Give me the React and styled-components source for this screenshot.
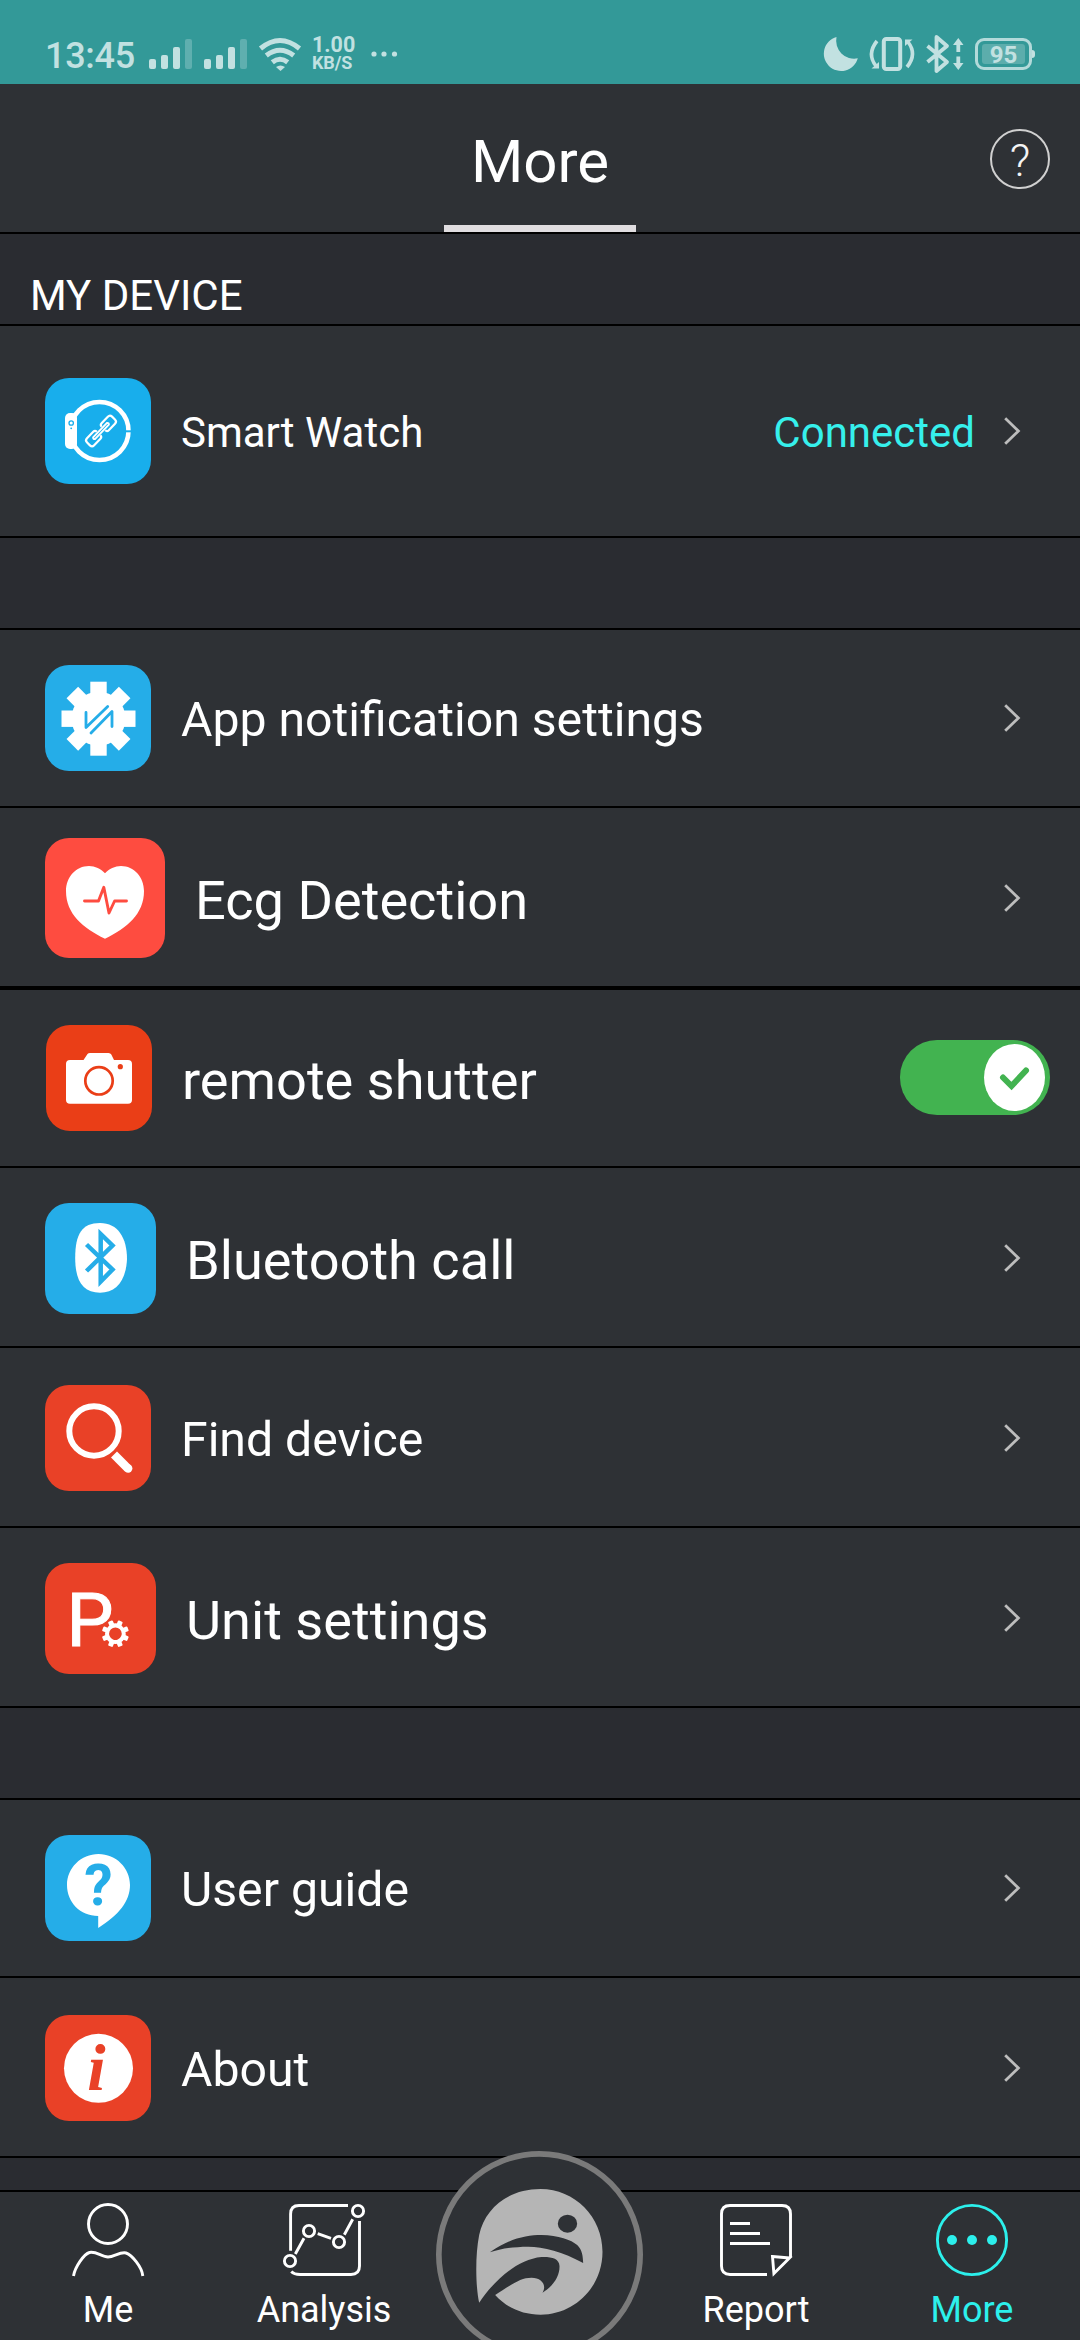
import React from 'react';
import styled, { createGlobalStyle } from 'styled-components';

const GlobalStyle = createGlobalStyle`
  body {
    margin: 0;
    background: #2a2c31;
    font-family: Roboto, sans-serif;
  }

  svg {
    display: block;
    flex-shrink: 0;
    overflow: visible;
  }
`;

const Screen = styled.div`
  display: flex;
  flex-direction: column;
  width: 1080px;
  height: 2340px;
  overflow: hidden;
  background: #2a2c31;
  color: #fff;
`;

/* status bar */

const StatusBar = styled.div`
  display: flex;
  align-items: center;
  justify-content: space-between;
  box-sizing: border-box;
  height: 84px;
  padding: 24px 45px 0 45px;
  background: #339998;
  color: #c2e1e1;
`;

const StatusGroup = styled.div`
  display: flex;
  align-items: center;
`;

const Clock = styled.span`
  width: 92px;
  margin-right: 12px;
  padding-top: 3px;
  font-size: 36px;
  line-height: 40px;
  font-weight: 500;
  letter-spacing: -0.3px;
`;

const Signal = styled.div`
  display: flex;
  align-items: flex-end;
  gap: 5px;
  height: 30px;
  margin-right: 12px;
`;

const SignalBar = styled.span`
  width: 7px;
  height: ${({ $height }) => $height}px;
  border-radius: 2px;
  background: ${({ $dim }) => ($dim ? '#5fafaf' : '#c2e1e1')};
`;

const NetSpeed = styled.div`
  display: flex;
  flex-direction: column;
  width: 42px;
  margin: 0 16px 0 11px;
  font-weight: 700;
  white-space: nowrap;
`;

const SpeedValue = styled.span`
  font-size: 21.5px;
  line-height: 18px;
`;

const SpeedUnit = styled.span`
  font-size: 18px;
  line-height: 18px;
  letter-spacing: -0.1px;
`;

const StatusIcon = styled.svg`
  margin-left: 12px;
`;

const Battery = styled.div`
  display: flex;
  align-items: center;
  margin-left: 12px;
`;

const BatteryCase = styled.div`
  box-sizing: border-box;
  width: 57px;
  height: 32px;
  padding: 3px;
  border: 3px solid #b3dada;
  border-radius: 9px;
`;

const BatteryLevel = styled.div`
  width: 43px;
  height: 20px;
  margin-left: 1px;
  border-radius: 3px;
  background: #5cadac;
  font-size: 24px;
  line-height: 22px;
  font-weight: 700;
  text-align: center;
`;

const BatteryNub = styled.span`
  width: 3px;
  height: 8px;
  border-radius: 0 3px 3px 0;
  background: #c2e1e1;
`;

/* header */

const Header = styled.header`
  display: grid;
  grid-template-columns: 1fr 192px 1fr;
  height: 148px;
  border-bottom: 2px solid #000;
  background: #2e3135;
`;

const Title = styled.h1`
  grid-column: 2;
  box-sizing: border-box;
  margin: 0;
  padding-top: 42px;
  border-bottom: 7px solid #e0dde0;
  font-size: 60px;
  line-height: 71px;
  font-weight: 400;
  text-align: center;
`;

const HelpButton = styled.button`
  justify-self: end;
  box-sizing: border-box;
  width: 60px;
  height: 60px;
  margin: 45px 30px 0 0;
  padding: 3px 0 0;
  border: 2px solid #d0d0d0;
  border-radius: 50%;
  background: none;
  color: #f4f4f4;
  font-family: inherit;
  font-size: 45px;
  line-height: 50px;
  font-weight: 300;
`;

/* list */

const SectionTitle = styled.h2`
  box-sizing: border-box;
  height: 92px;
  margin: 0;
  padding: 37px 30px 0;
  border-bottom: 2px solid #000;
  font-size: 42px;
  line-height: 49px;
  font-weight: 400;
`;

const Spacer = styled.div`
  height: ${({ $height = 90 }) => $height}px;
  border-bottom: 2px solid #000;
`;

const Row = styled.div`
  display: flex;
  align-items: center;
  box-sizing: border-box;
  height: ${({ $height = 180 }) => $height}px;
  padding: ${({ $top = 0 }) => $top}px 0 0 ${({ $left = 45 }) => $left}px;
  border-bottom: ${({ $line = 2 }) => $line}px solid #000;
  background: #2e3135;
`;

const Tile = styled.svg`
  width: ${({ $size = 106 }) => $size}px;
  height: ${({ $size = 106 }) => $size}px;
  border-radius: 24px;
  background: ${({ $color }) => $color};
`;

const labelSizes = {
  small: { font: 42, line: 50, top: 4 },
  medium: { font: 48.2, line: 58, top: 3 },
  large: { font: 54.15, line: 65, top: 5 },
};

const Label = styled.span`
  flex: 1;
  margin-left: 30px;
  padding-top: ${({ $size = 'medium' }) => labelSizes[$size].top}px;
  font-size: ${({ $size = 'medium' }) => labelSizes[$size].font}px;
  line-height: ${({ $size = 'medium' }) => labelSizes[$size].line}px;
`;

const Status = styled.span`
  margin-right: 29px;
  padding-top: 4px;
  color: #36f0ec;
  font-size: 42px;
  line-height: 50px;
`;

const ChevronIcon = styled.svg`
  width: 16px;
  height: 28px;
  margin-right: 60px;
`;

const Toggle = styled.div`
  display: flex;
  align-items: center;
  justify-content: flex-end;
  box-sizing: border-box;
  width: 150px;
  height: 75px;
  margin: 0 30px 1px 0;
  padding-right: 5px;
  border-radius: 37px;
  background: #42b350;
`;

const Knob = styled.div`
  display: flex;
  align-items: center;
  justify-content: center;
  width: 61px;
  height: 67px;
  border-radius: 50%;
  background: #fff;
`;

/* bottom navigation */

const Nav = styled.nav`
  position: relative;
  display: grid;
  grid-template-columns: repeat(5, 216px);
  height: 148px;
  background: #2e3135;
`;

const NavItem = styled.a`
  display: flex;
  flex-direction: column;
  align-items: center;
  grid-column: ${({ $column }) => $column};
  padding-top: 12px;
  color: ${({ $active }) => ($active ? '#2cf0ec' : '#fff')};
  font-size: 36px;
  line-height: 42px;
`;

const NavLabel = styled.span`
  margin-top: 13px;
`;

const HomeButton = styled.svg`
  position: absolute;
  left: 436px;
  bottom: 0;
  width: 207px;
  height: 189px;
`;

const Chevron = () => (
  <ChevronIcon viewBox="0 0 16 28">
    <path d="M1.2 1.2L14.4 14L1.2 26.8" fill="none" stroke="#bdbdbd" strokeWidth="2.8" />
  </ChevronIcon>
);

const SignalBars = () => (
  <Signal>
    <SignalBar $height={10} />
    <SignalBar $height={14} />
    <SignalBar $height={22} />
    <SignalBar $height={30} $dim />
  </Signal>
);

const TopStatus = () => (
  <StatusBar>
    <StatusGroup>
      <Clock>13:45</Clock>
      <SignalBars />
      <SignalBars />
      <svg width="42" height="33" viewBox="0 0 42 33" fill="none" stroke="#c2e1e1" strokeWidth="5">
        <path d="M1.5 10.5Q21 -5.5 40.5 10.5" />
        <path d="M7.3 17.5Q21 7 34.7 17.5" />
        <path d="M13.3 24.3Q21 18.3 28.7 24.3" />
        <path d="M17 29Q21.5 26 26 29L21.5 33Z" fill="#c2e1e1" stroke="none" />
      </svg>
      <NetSpeed>
        <SpeedValue>1.00</SpeedValue>
        <SpeedUnit>KB/S</SpeedUnit>
      </NetSpeed>
      <svg width="28" height="6" viewBox="0 0 28 6" fill="#c2e1e1">
        <circle cx="4" cy="3" r="2.6" />
        <circle cx="14" cy="3" r="2.6" />
        <circle cx="24.5" cy="3" r="2.6" />
      </svg>
    </StatusGroup>
    <StatusGroup>
      <svg width="34" height="34" viewBox="0 0 34 34" fill="#c2e1e1">
        <path d="M12.5 0A17.3 17.3 0 1 0 33.8 21.3A18 18 0 0 1 12.5 0Z" />
      </svg>
      <StatusIcon width="44" height="34" viewBox="0 0 44 34" fill="none" stroke="#c2e1e1" strokeWidth="3.6">
        <rect x="13.8" y="2" width="16.4" height="30" rx="2.5" strokeWidth="4" />
        <path d="M7 4Q-3.5 17 6 29" />
        <path d="M37 30Q47.5 17 38 5" />
        <path d="M9 25V31.5H1.5Z" fill="#c2e1e1" stroke="none" />
        <path d="M35 9V2.5H42.5Z" fill="#c2e1e1" stroke="none" />
      </StatusIcon>
      <StatusIcon
        width="37"
        height="38"
        viewBox="0 0 37 38"
        fill="none"
        stroke="#c2e1e1"
        strokeWidth="3.8"
        strokeLinejoin="round"
      >
        <path d="M1.5 11L21 27L10.5 36V2L21 11L1.5 27" />
        <path d="M32.3 7V17M32.3 21.5V31" />
        <path d="M27 10L32.3 3L37.5 10ZM27 28L32.3 35L37.5 28Z" fill="#c2e1e1" stroke="none" />
      </StatusIcon>
      <Battery>
        <BatteryCase>
          <BatteryLevel>95</BatteryLevel>
        </BatteryCase>
        <BatteryNub />
      </Battery>
    </StatusGroup>
  </StatusBar>
);

const WatchIcon = () => (
  <Tile $color="#18aeec" viewBox="0 0 106 106" fill="none">
    <circle cx="54.5" cy="53" r="29" stroke="#fff" strokeWidth="4.6" />
    <path d="M81 53.3H88" stroke="#18aeec" strokeWidth="2" />
    <rect x="20" y="35" width="12" height="36" rx="5" fill="#fff" />
    <circle cx="26.2" cy="45" r="2.2" stroke="#18aeec" strokeWidth="1.3" />
    <circle cx="26.2" cy="50.3" r="0.9" fill="#18aeec" />
    <g transform="translate(56 53) rotate(-46)" stroke="#fff" strokeWidth="2.2">
      <path d="M3.5 -2.5Q3.5 -5 6 -5H15Q18 -5 18 -2V2Q18 5 15 5H6Q3.5 5 3.5 2.5" />
      <path d="M-3.5 -2.5Q-3.5 -5 -6 -5H-15Q-18 -5 -18 -2V2Q-18 5 -15 5H-6Q-3.5 5 -3.5 2.5" />
      <path d="M-10 -1.3Q-11.5 0 -10 1.3H10Q11.5 0 10 -1.3Z" strokeWidth="1.9" />
    </g>
  </Tile>
);

const gearTeeth = [0, 45, 90, 135, 180, 225, 270, 315];

const NotificationIcon = () => (
  <Tile $color="#25ade8" viewBox="0 0 106 106" fill="none">
    <g transform="translate(53.5 53.7)" fill="#fff">
      <circle r="27" />
      {gearTeeth.map((angle) => (
        <rect key={angle} x="-8.2" y="-37" width="16.4" height="20" transform={`rotate(${angle})`} />
      ))}
    </g>
    <g stroke="#25ade8" strokeWidth="2.8" strokeLinecap="round" strokeLinejoin="round">
      <path d="M41 47.5V62.5L62.7 41.5" />
      <path d="M46 68L67 46.5V61.5" />
    </g>
  </Tile>
);

const EcgIcon = () => (
  <Tile $size={120} $color="#fe4c40" viewBox="0 0 120 120" fill="none">
    <path
      d="M60 35.3C64 31 70 28 76 28C89 28 99 39 99 53C99 76 82 90 60 100.7C38 90 21 76 21 53C21 39 31 28 44 28C50 28 56 31 60 35.3Z"
      fill="#fff"
    />
    <path
      d="M39.5 63H53.5L58.8 49.3L64 75L69.6 63H81.5"
      stroke="#fe4c40"
      strokeWidth="2.9"
      strokeLinecap="round"
      strokeLinejoin="round"
    />
  </Tile>
);

const CameraIcon = () => (
  <Tile $color="#ea3e17" viewBox="0 0 106 106" fill="none">
    <path
      d="M24 35H37.5L41.5 29Q42.3 28 44 28H62.5Q64.5 28 65.3 29.5L68 35H82Q86 35 86 39V75Q86 78.7 82 78.7H24Q20 78.7 20 75V39Q20 35 24 35Z"
      fill="#fff"
    />
    <circle cx="53" cy="55.8" r="13.7" stroke="#ea3e17" strokeWidth="2.7" />
    <circle cx="74.3" cy="41.7" r="2.6" fill="#ea3e17" />
  </Tile>
);

const BluetoothIcon = () => (
  <Tile $size={111} $color="#25ade8" viewBox="0 0 111 111" fill="none">
    <path
      d="M55 20C73 20 82 35 82 56C81 78 71 89.7 55 89.7C38 89.7 30.2 78 30.2 55C30.2 31 37 20 55 20Z"
      fill="#fff"
    />
    <path d="M41.5 41.5L67.5 66.5L55.7 78.5V31L67.5 42.5L41.5 68" stroke="#25ade8" strokeWidth="4.5" />
  </Tile>
);

const FindIcon = () => (
  <Tile $color="#e94127" viewBox="0 0 106 106" fill="none">
    <circle cx="49" cy="46" r="24.7" stroke="#fff" strokeWidth="6" />
    <path d="M69 69.5L83.2 83.8" stroke="#fff" strokeWidth="8.5" />
    <circle cx="83.2" cy="83.5" r="4.2" fill="#fff" />
  </Tile>
);

const UnitIcon = () => (
  <Tile $size={111} $color="#e94127" viewBox="0 0 111 111" fill="#fff">
    <text x="21.5" y="83" fontSize="74.5" fontWeight="400" stroke="#fff" strokeWidth="1.1">
      P
    </text>
    <g transform="translate(70.4 70.7) rotate(22.5)">
      <circle r="11.7" fill="#e94127" />
      <circle r="8.3" fill="none" stroke="#fff" strokeWidth="4" />
      {gearTeeth.map((angle) => (
        <rect key={angle} x="-2.5" y="-13.6" width="5" height="5" rx="1" transform={`rotate(${angle})`} />
      ))}
    </g>
  </Tile>
);

const GuideIcon = () => (
  <Tile $color="#25ade8" viewBox="0 0 106 106">
    <path
      d="M53.2 93V81C35 81 22 67 22 50C22 33 36 19 53.5 19C71 19 85 33 85 50C85 66 74 80 53.2 93Z"
      fill="#fff"
    />
    <text x="53.5" y="70" fontSize="57" fontWeight="700" textAnchor="middle" fill="#25ade8">
      ?
    </text>
  </Tile>
);

const AboutIcon = () => (
  <Tile $color="#e94127" viewBox="0 0 106 106">
    <circle cx="53.5" cy="53.3" r="34.5" fill="#fff" />
    <text
      x="51.5"
      y="74.5"
      fontFamily="Liberation Serif, serif"
      fontSize="66"
      fontWeight="700"
      fontStyle="italic"
      textAnchor="middle"
      fill="#e94127"
    >
      i
    </text>
  </Tile>
);

const NavIcon = ({ children }) => (
  <svg width="72" height="72" viewBox="0 0 72 72" fill="none" stroke="currentColor" strokeWidth="2.9">
    {children}
  </svg>
);

const BottomNav = () => (
  <Nav>
    <NavItem $column={1}>
      <NavIcon>
        <circle cx="36" cy="20" r="19.5" />
        <path d="M1.5 72C3 63 12 50 17.5 48.5C24 47 30 53 36 53C42 53 48 47.5 54 49C60 51 70 63 70.8 72" />
      </NavIcon>
      <NavLabel>Me</NavLabel>
    </NavItem>
    <NavItem $column={2}>
      <NavIcon>
        <path d="M2.6 46.7V10Q2.6 1.5 11 1.5H60" />
        <path d="M71.5 17V62Q71.5 70.5 63 70.5H12Q6 70.5 3.3 67.5" />
        <circle cx="2" cy="57" r="5.6" />
        <circle cx="21" cy="27" r="5.6" />
        <circle cx="51" cy="38" r="5.6" />
        <circle cx="70" cy="7" r="5.6" />
        <path d="M7.3 50L16 34.3M29.7 29.7L43 34.3M56.3 30.7L64.7 15.3" />
      </NavIcon>
      <NavLabel>Analysis</NavLabel>
    </NavItem>
    <NavItem $column={4}>
      <NavIcon>
        <path d="M47 70.5H10Q1.5 70.5 1.5 62V10Q1.5 1.5 10 1.5H62Q70.5 1.5 70.5 10V53" />
        <path d="M52.5 52.5L69.5 54L53.9 69.5Z" />
        <path d="M10 19.5H30M10 29.5H40M10 39.5H50" />
      </NavIcon>
      <NavLabel>Report</NavLabel>
    </NavItem>
    <NavItem $column={5} $active>
      <NavIcon>
        <circle cx="36" cy="36" r="34.6" />
        <g fill="currentColor" stroke="none">
          <circle cx="16" cy="36" r="5" />
          <circle cx="36" cy="36" r="5" />
          <circle cx="56" cy="36" r="5" />
        </g>
      </NavIcon>
      <NavLabel>More</NavLabel>
    </NavItem>
    <HomeButton viewBox="108.5 63 621 567">
      <circle cx="419" cy="373.5" r="302" fill="#2e3135" stroke="#7a7a7a" strokeWidth="17" />
      <path
        d="M238 518C228 475 225 380 238 315C255 235 325 177 422 177C525 177 608 261 608 365C608 470 525 554 422 554C368 554 320 533 286 495C335 463 362 443 395 443C425 443 442 465 428 488C465 465 480 435 479 408C478 385 455 380 425 381C350 388 280 455 238 518Z"
        fill="#b5b5b5"
      />
      <g fill="#2e3135">
        <path d="M270 367C330 325 380 315 425 315C475 316 515 330 532 345C548 360 549 380 550 399C490 365 430 350 385 350C340 350 300 357 270 367Z" />
        <ellipse cx="503" cy="281" rx="29" ry="27" />
      </g>
    </HomeButton>
  </Nav>
);

const App = () => {
  return (
    <Screen>
      <GlobalStyle />
      <TopStatus />
      <Header>
        <Title>More</Title>
        <HelpButton type="button">?</HelpButton>
      </Header>
      <SectionTitle>MY DEVICE</SectionTitle>
      <Row $height={212}>
        <WatchIcon />
        <Label $size="small">Smart Watch</Label>
        <Status>Connected</Status>
        <Chevron />
      </Row>
      <Spacer />
      <Row $height={178}>
        <NotificationIcon />
        <Label>App notification settings</Label>
        <Chevron />
      </Row>
      <Row $height={182} $line={4} $top={2}>
        <EcgIcon />
        <Label $size="large">Ecg Detection</Label>
        <Chevron />
      </Row>
      <Row $height={178} $left={46}>
        <CameraIcon />
        <Label $size="large">remote shutter</Label>
        <Toggle>
          <Knob>
            <svg width="29" height="24" viewBox="0 0 29 24">
              <path
                d="M3 11.5L11.5 20L26 4.5"
                fill="none"
                stroke="#42b350"
                strokeWidth="6"
                strokeLinecap="round"
              />
            </svg>
          </Knob>
        </Toggle>
      </Row>
      <Row $top={2}>
        <BluetoothIcon />
        <Label $size="large">Bluetooth call</Label>
        <Chevron />
      </Row>
      <Row $top={2}>
        <FindIcon />
        <Label>Find device</Label>
        <Chevron />
      </Row>
      <Row $top={2}>
        <UnitIcon />
        <Label $size="large">Unit settings</Label>
        <Chevron />
      </Row>
      <Spacer />
      <Row $height={178}>
        <GuideIcon />
        <Label>User guide</Label>
        <Chevron />
      </Row>
      <Row $top={2}>
        <AboutIcon />
        <Label>About</Label>
        <Chevron />
      </Row>
      <Spacer $height={32} />
      <BottomNav />
    </Screen>
  );
};

export default App;
